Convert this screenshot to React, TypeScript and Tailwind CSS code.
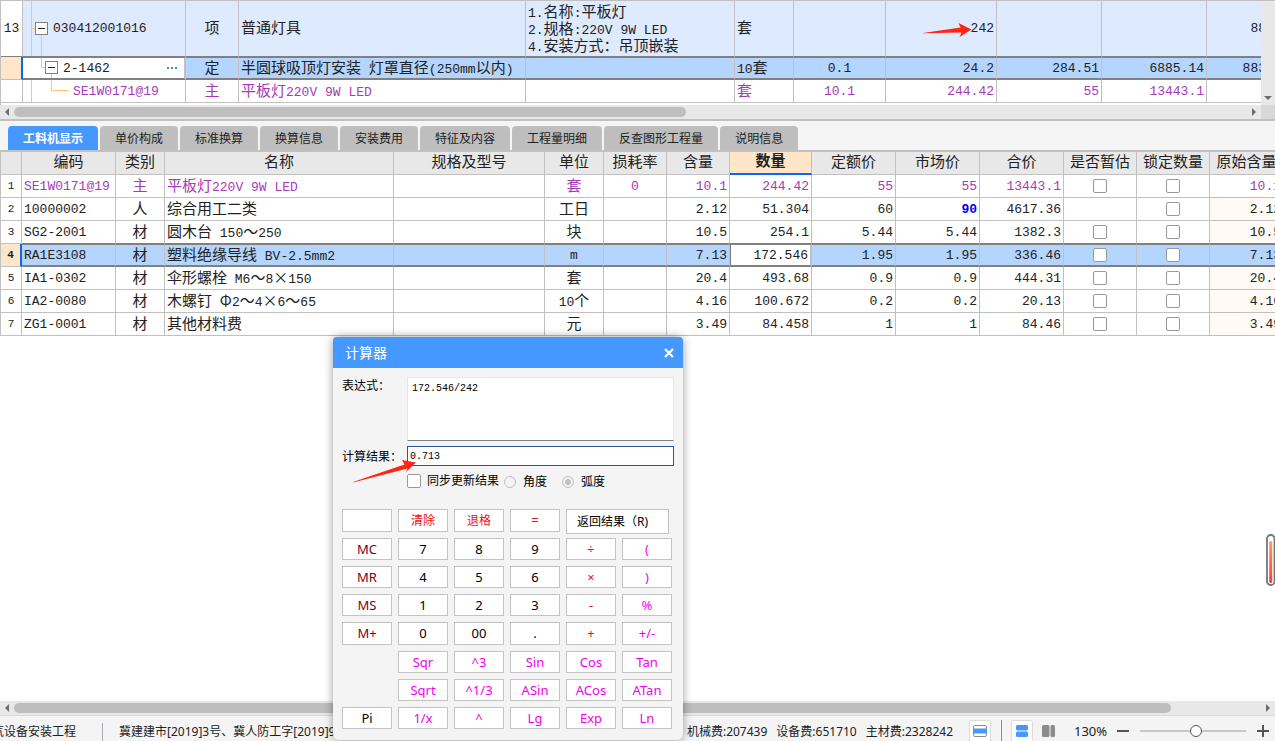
import { useState, type ReactNode } from 'react';
import clsx from 'clsx';

const GRID_FONT = "font-['Liberation_Mono','Noto_Sans_CJK_SC',monospace]";
const UI_FONT = "font-['Noto_Sans','Noto_Sans_CJK_SC',sans-serif]";

// Chinese runs are set a little larger than the monospaced latin ones
function Mixed({ text }: { text: string }) {
    const runs = text.split(/([\u2e80-\uffff×Φ]+)/).filter(Boolean);
    return (
        <>
            {runs.map((run, i) =>
                /[\u2e80-\uffff×Φ]/.test(run) ? (
                    <span key={i} className="font-['Noto_Sans_CJK_SC',sans-serif] text-[15px] leading-[15px]">{run}</span>
                ) : (
                    <span key={i}>{run}</span>
                )
            )}
        </>
    );
}

type CellProps = {
    children?: ReactNode;
    align?: 'left' | 'center' | 'right';
    selected?: boolean;
    aboveSelected?: boolean;
    className?: string;
};

function Cell({ children, align = 'left', selected, aboveSelected, className }: CellProps) {
    return (
        <td
            className={clsx(
                'relative border-r border-r-[#c0c0c0] px-0.5 py-0 whitespace-pre',
                align === 'center' && 'text-center',
                align === 'right' && 'text-right',
                selected ? 'border-t border-b-2 border-y-[#808080]' : 'border-b',
                !selected && (aboveSelected ? 'border-b-[#808080]' : 'border-b-[#c0c0c0]'),
                className
            )}
        >
            {typeof children === 'string' ? <Mixed text={children} /> : children}
        </td>
    );
}

function ScrollArrow({ dir }: { dir: 'left' | 'right' | 'down' }) {
    const paths = { left: 'M9 3v8L5 7z', right: 'M5 3v8l4-4z', down: 'M3 5h8l-4 4z' };
    return (
        <button aria-label={dir} className="size-[14px] shrink-0">
            <svg viewBox="0 0 14 14" className="size-[14px]"><path d={paths[dir]} fill="#6b6b75" /></svg>
        </button>
    );
}

/* ---------- top grid ---------- */

function BillGrid() {
    return (
        <section className={clsx('flex border-t border-l border-[#c0c0c0] bg-white text-[13px] text-[#222]', GRID_FONT)}>
            <div className="h-[104px] min-w-0 flex-1 overflow-hidden">
                <table className="w-[1268px] table-fixed border-separate border-spacing-0 leading-[17px]">
                    <colgroup>
                        <col className="w-[22px]" />
                        <col className="w-[163px]" />
                        <col className="w-[53px]" />
                        <col className="w-[287px]" />
                        <col className="w-[209px]" />
                        <col className="w-[59px]" />
                        <col className="w-[92px]" />
                        <col className="w-[111px]" />
                        <col className="w-[105px]" />
                        <col className="w-[105px]" />
                        <col className="w-[62px]" />
                    </colgroup>
                    <tbody>
                        <tr className="h-[56px] bg-[#deeaff]">
                            <Cell aboveSelected align="center" className="bg-white">13</Cell>
                            <Cell aboveSelected className="pl-[30px]">
                                <svg className="absolute top-0 left-0 h-[55px] w-[30px]" viewBox="0 0 30 55" fill="none">
                                    <path d="M8.5 0v55M9 27.5h4M18.5 34v21" stroke="#ffc56b" />
                                    <rect x="12.5" y="21.5" width="12" height="12" fill="#fff" stroke="#808080" />
                                    <path d="M15 27.5h7" stroke="#222" />
                                </svg>
                                <Mixed text="030412001016" />
                            </Cell>
                            <Cell aboveSelected align="center">项</Cell>
                            <Cell aboveSelected>普通灯具</Cell>
                            <Cell aboveSelected>
                                {['1.名称:平板灯', '2.规格:220V 9W LED', '4.安装方式：吊顶嵌装'].map((line) => (
                                    <p key={line} className="h-[17px]"><Mixed text={line} /></p>
                                ))}
                            </Cell>
                            <Cell aboveSelected>套</Cell>
                            <Cell aboveSelected />
                            <Cell aboveSelected align="right">
                                <svg className="absolute top-[21px] right-6 h-4 w-[49px]" viewBox="0 0 49 16">
                                    <path d="M0 11 37.5 5.5 35.5 1 48.5 7.5 36.5 15 38.5 10.5 0 11.3z" fill="#ff2414" />
                                </svg>
                                <span>242</span>
                            </Cell>
                            <Cell aboveSelected />
                            <Cell aboveSelected />
                            <Cell aboveSelected align="right">88</Cell>
                        </tr>
                        <tr className="h-[23px] bg-[#b3d5ff]">
                            <td className="border-r-2 border-b border-r-[#0a64ff] border-b-[#c0c0c0] bg-[#ffe6c8]" />
                            <Cell selected className="border-r-2 border-r-[#808080] bg-white pl-[40px]">
                                <svg className="absolute top-0 left-0 h-[20px] w-[40px]" viewBox="0 0 40 20" fill="none">
                                    <path d="M18.5 0v9.5h5M28.5 16v4" stroke="#ffc56b" />
                                    <rect x="22.5" y="3.5" width="12" height="12" fill="#fff" stroke="#808080" />
                                    <path d="M25 9.5h7" stroke="#222" />
                                </svg>
                                <span>2-1462</span>
                                <button aria-label="更多" className="absolute top-0 right-1.5 h-full">
                                    <svg className="h-[2px] w-[11px]" viewBox="0 0 11 2">
                                        <path d="M0 0h2v2H0zM4 0h2v2H4zM8 0h2v2H8z" fill="#3c8ccc" />
                                    </svg>
                                </button>
                            </Cell>
                            <Cell selected align="center">定</Cell>
                            <Cell selected>半圆球吸顶灯安装 灯罩直径(250mm以内)</Cell>
                            <Cell selected />
                            <Cell selected>10套</Cell>
                            <Cell selected align="center">0.1</Cell>
                            <Cell selected align="right">24.2</Cell>
                            <Cell selected align="right">284.51</Cell>
                            <Cell selected align="right">6885.14</Cell>
                            <Cell selected align="right">883</Cell>
                        </tr>
                        <tr className="h-[23px] text-[#a53cb5]">
                            <Cell />
                            <Cell className="pl-[50px]">
                                <svg className="absolute top-0 left-0 h-[22px] w-[48px]" viewBox="0 0 48 22" fill="none">
                                    <path d="M8.5 0v22M28.5 0v10.5h17" stroke="#ffc56b" />
                                </svg>
                                <span>SE1W0171@19</span>
                            </Cell>
                            <Cell align="center">主</Cell>
                            <Cell>平板灯220V 9W LED</Cell>
                            <Cell />
                            <Cell>套</Cell>
                            <Cell align="center">10.1</Cell>
                            <Cell align="right">244.42</Cell>
                            <Cell align="right">55</Cell>
                            <Cell align="right">13443.1</Cell>
                            <Cell />
                        </tr>
                    </tbody>
                </table>
            </div>
            <div className="flex w-[14px] shrink-0 flex-col justify-end bg-[#e8e8e8]">
                <ScrollArrow dir="down" />
            </div>
        </section>
    );
}

/* ---------- tabs ---------- */

const tabs = ['工料机显示', '单价构成', '标准换算', '换算信息', '安装费用', '特征及内容', '工程量明细', '反查图形工程量', '说明信息'];

function Tabs() {
    const [active, setActive] = useState(0);
    return (
        <nav className="flex gap-0.5 border-b-2 border-[#c0c0c0] bg-[#f5f5f5] pt-[5px] pl-2 text-xs">
            {tabs.map((tab, i) => (
                <button
                    key={tab}
                    onClick={() => setActive(i)}
                    className={clsx(
                        'h-6 rounded-t-sm px-[15px] pt-0.5 whitespace-nowrap',
                        i === active ? 'bg-[#4598ff] font-bold text-white' : 'bg-[#bebebe] text-[#222]'
                    )}
                >
                    {tab}
                </button>
            ))}
        </nav>
    );
}

/* ---------- resource grid ---------- */

const headers = ['编码', '类别', '名称', '规格及型号', '单位', '损耗率', '含量', '数量', '定额价', '市场价', '合价', '是否暂估', '锁定数量', '原始含量'];

type Resource = {
    code: string;
    kind: string;
    name: string;
    unit: string;
    loss?: string;
    content: string;
    qty: string;
    quota: string;
    market: string;
    total: string;
    noEstimate?: boolean;
};

const resources: Resource[] = [
    { code: 'SE1W0171@19', kind: '主', name: '平板灯220V 9W LED', unit: '套', loss: '0', content: '10.1', qty: '244.42', quota: '55', market: '55', total: '13443.1' },
    { code: '10000002', kind: '人', name: '综合用工二类', unit: '工日', content: '2.12', qty: '51.304', quota: '60', market: '90', total: '4617.36', noEstimate: true },
    { code: 'SG2-2001', kind: '材', name: '圆木台 150～250', unit: '块', content: '10.5', qty: '254.1', quota: '5.44', market: '5.44', total: '1382.3' },
    { code: 'RA1E3108', kind: '材', name: '塑料绝缘导线 BV-2.5mm2', unit: 'm', content: '7.13', qty: '172.546', quota: '1.95', market: '1.95', total: '336.46' },
    { code: 'IA1-0302', kind: '材', name: '伞形螺栓 M6～8×150', unit: '套', content: '20.4', qty: '493.68', quota: '0.9', market: '0.9', total: '444.31' },
    { code: 'IA2-0080', kind: '材', name: '木螺钉 Φ2～4×6～65', unit: '10个', content: '4.16', qty: '100.672', quota: '0.2', market: '0.2', total: '20.13' },
    { code: 'ZG1-0001', kind: '材', name: '其他材料费', unit: '元', content: '3.49', qty: '84.458', quota: '1', market: '1', total: '84.46' },
];

function Tick({ label }: { label: string }) {
    return (
        <input
            type="checkbox"
            aria-label={label}
            className="mx-auto block size-[14px] appearance-none rounded-[2px] border border-[#999] bg-white checked:bg-[#4598ff]"
        />
    );
}

function ResourceGrid() {
    const selectedRow = 3;
    return (
        <section className={clsx('min-h-0 flex-1 overflow-hidden bg-white text-[13px] text-[#222]', GRID_FONT)}>
            <table className="w-[1284px] table-fixed border-separate border-spacing-0 border-l border-[#c0c0c0] leading-[17px]">
                <colgroup>
                    <col className="w-[21px]" />
                    <col className="w-[94px]" />
                    <col className="w-[49px]" />
                    <col className="w-[229px]" />
                    <col className="w-[151px]" />
                    <col className="w-[59px]" />
                    <col className="w-[63px]" />
                    <col className="w-[63px]" />
                    <col className="w-[82px]" />
                    <col className="w-[84px]" />
                    <col className="w-[84px]" />
                    <col className="w-[84px]" />
                    <col className="w-[73px]" />
                    <col className="w-[73px]" />
                    <col className="w-[74px]" />
                </colgroup>
                <thead>
                    <tr className="h-[23px] bg-[#e8e8e8] text-[15px]">
                        <th className="border-r border-b border-[#c0c0c0]" />
                        {headers.map((h) => (
                            <th
                                key={h}
                                className={clsx(
                                    'border-r border-[#c0c0c0] p-0 whitespace-nowrap',
                                    h === '数量'
                                        ? 'border-b-2 border-b-[#0a64ff] bg-[#ffe6c8] font-bold'
                                        : 'border-b font-normal'
                                )}
                            >
                                {h}
                            </th>
                        ))}
                    </tr>
                </thead>
                <tbody>
                    {resources.map((r, i) => {
                        const selected = i === selectedRow;
                        const edge = { selected, aboveSelected: i === selectedRow - 1 };
                        return (
                            <tr key={r.code} className={clsx('h-[23px]', selected && 'bg-[#b3d5ff]', i === 0 && 'text-[#a53cb5]')}>
                                <td
                                    className={clsx(
                                        'border-b border-b-[#c0c0c0] p-0 text-center text-[11px]',
                                        selected ? 'border-r-2 border-r-[#0a64ff] bg-[#ffe6c8] font-bold' : 'border-r border-r-[#c0c0c0]',
                                        i === 0 && 'text-[#222]'
                                    )}
                                >
                                    {i + 1}
                                </td>
                                <Cell {...edge}>{r.code}</Cell>
                                <Cell {...edge} align="center">{r.kind}</Cell>
                                <Cell {...edge}>{r.name}</Cell>
                                <Cell {...edge} />
                                <Cell {...edge} align="center">{r.unit}</Cell>
                                <Cell {...edge} align="center">{r.loss ?? ''}</Cell>
                                <Cell {...edge} align="right" className={selected ? 'border-r-[#808080]' : ''}>{r.content}</Cell>
                                <Cell {...edge} align="right" className={selected ? 'border-r-2 border-l border-x-[#808080] bg-white' : ''}>{r.qty}</Cell>
                                <Cell {...edge} align="right">{r.quota}</Cell>
                                <Cell {...edge} align="right" className={r.market === '90' ? 'font-bold text-[#0000f0]' : ''}>{r.market}</Cell>
                                <Cell {...edge} align="right">{r.total}</Cell>
                                <Cell {...edge}>{!r.noEstimate && <Tick label={`${r.name} 是否暂估`} />}</Cell>
                                <Cell {...edge}><Tick label={`${r.name} 锁定数量`} /></Cell>
                                <Cell {...edge} align="right" className={i > 0 && !selected ? 'bg-[#fffaf5]' : ''}>{r.content}</Cell>
                            </tr>
                        );
                    })}
                </tbody>
            </table>
        </section>
    );
}

/* ---------- calculator ---------- */

type Key = { label: string; tone?: 'black' | 'red' | 'maroon' | 'pink'; wide?: boolean; hidden?: boolean };

const tones = {
    black: 'text-black',
    red: 'text-[#ee1111]',
    maroon: 'text-[#800010]',
    pink: 'text-[#f000f0]',
};

const row = (labels: string[], list: Key['tone'][]): Key[] =>
    labels.map((label, i) => ({ label, tone: list[i], hidden: label === '' }));

const digits: Key['tone'][] = ['maroon', 'black', 'black', 'black', 'red', 'pink'];
const funcs: Key['tone'][] = ['black', 'pink', 'pink', 'pink', 'pink', 'pink'];

const keys: Key[] = [
    { label: ' ' },
    { label: '清除', tone: 'red' },
    { label: '退格', tone: 'red' },
    { label: '=', tone: 'red' },
    { label: '返回结果（R)', wide: true },
    ...row(['MC', '7', '8', '9', '÷', '('], digits),
    ...row(['MR', '4', '5', '6', '×', ')'], digits),
    ...row(['MS', '1', '2', '3', '-', '%'], digits),
    ...row(['M+', '0', '00', '.', '+', '+/-'], digits),
    ...row(['', 'Sqr', '^3', 'Sin', 'Cos', 'Tan'], funcs),
    ...row(['', 'Sqrt', '^1/3', 'ASin', 'ACos', 'ATan'], funcs),
    ...row(['Pi', '1/x', '^', 'Lg', 'Exp', 'Ln'], funcs),
];

function Calculator() {
    const [expression, setExpression] = useState('172.546/242');
    const [result, setResult] = useState('0.713');

    return (
        <div role="dialog" aria-label="计算器" className="absolute top-[337px] left-[333px] w-[350px] rounded-md bg-[#f4f4f4] pb-[11px] text-xs text-black shadow-[0_0_10px_rgba(0,0,0,0.4)]">
            <header className="flex h-[31px] items-center justify-between rounded-t-[4px] bg-[#4598ff] pr-[9px] pl-3 text-sm text-white">
                <h2>计算器</h2>
                <button aria-label="关闭">
                    <svg className="size-[10px]" viewBox="0 0 10 10"><path d="M1 1l8 8M9 1L1 9" stroke="#fff" strokeWidth="2.2" /></svg>
                </button>
            </header>
            <div className="relative flex flex-col px-[9px] pt-[9px]">
                <div className="flex">
                    <label htmlFor="expr" className="w-[65px] shrink-0 pt-px">表达式：</label>
                    <textarea
                        id="expr"
                        value={expression}
                        onChange={(e) => setExpression(e.target.value)}
                        className="h-16 flex-1 resize-none border border-[#e6e6e6] border-b-[#808080] bg-white px-1 py-[3px] font-['Liberation_Mono',monospace] text-[10px] leading-4 outline-none"
                    />
                </div>
                <div className="mt-[5px] flex items-center">
                    <label htmlFor="result" className="w-[65px] shrink-0 pt-px whitespace-nowrap">计算结果：</label>
                    <input
                        id="result"
                        value={result}
                        onChange={(e) => setResult(e.target.value)}
                        className="h-5 min-w-0 flex-1 border border-[#2a5699] bg-white px-0.5 font-['Liberation_Mono',monospace] text-[10px] outline-none"
                    />
                </div>
                <div className="mt-[5px] flex h-5 items-center pl-[65px]">
                    <label className="flex items-center gap-1.5">
                        <input type="checkbox" className="size-[14px] appearance-none rounded-[2px] border border-[#999] bg-white" />
                        同步更新结果
                    </label>
                    <label className="ml-[5px] flex items-center gap-[7px] pt-0.5">
                        <input type="radio" name="angle" className="size-3 appearance-none rounded-full border border-[#c0c0c0]" />
                        角度
                    </label>
                    <label className="ml-[15px] flex items-center gap-[7px] pt-0.5">
                        <input type="radio" name="angle" defaultChecked className="size-3 appearance-none rounded-full border border-[#c0c0c0] bg-[#f4f4f4] bg-clip-content p-0.5 checked:bg-[#c0c0c0]" />
                        弧度
                    </label>
                </div>
                <div className="mt-[18px] grid grid-cols-[repeat(6,50px)] grid-rows-[23px_22px_22px_22px_23px_22px_22px_22px] gap-1.5">
                    {keys.map((k, i) =>
                        k.hidden ? (
                            <span key={i} />
                        ) : (
                            <button
                                key={i}
                                aria-label={k.label.trim() || '空'}
                                className={clsx(
                                    'flex items-center border border-[#c3c3c3] bg-white pt-px',
                                    tones[k.tone ?? 'black'],
                                    k.wide ? 'col-span-2 h-[25px] w-[103px] justify-start pl-[10px] text-xs' : 'justify-center',
                                    !k.wide && (/[\u4e00-\u9fff]/.test(k.label) ? 'text-xs' : 'text-[13px]')
                                )}
                            >
                                {k.label}
                            </button>
                        )
                    )}
                </div>
                <svg className="absolute top-[91px] left-5 h-[25px] w-[64px]" viewBox="0 0 64 25">
                    <path d="M0 23 51.5 5.5 49 1 63 3.5 53 13 54.5 9.5 0 23.5z" fill="#ff2414" />
                </svg>
            </div>
        </div>
    );
}

/* ---------- status bar ---------- */

function StatusBar() {
    return (
        <footer className="flex h-[26px] items-start overflow-hidden border-t border-[#d8d8d8] bg-[#f4f4f4] pt-1 text-xs leading-[22px] whitespace-nowrap text-[#222]">
            <span className="-ml-2 pt-px">气设备安装工程</span>
            <span className="mt-[3px] ml-[26px] h-5 w-px bg-[#a9a9b5]" />
            <span className="ml-4 min-w-0 shrink overflow-hidden pt-px">冀建建市[2019]3号、冀人防工字[2019]9</span>
            <div className="ml-auto flex shrink-0 items-start">
                <span className="pt-px">机械费:207439</span>
                <span className="ml-[9px] pt-px">设备费:651710</span>
                <span className="ml-[9px] pt-px">主材费:2328242</span>
                <button aria-label="单栏" className="ml-4 flex size-[22px] items-center justify-center rounded-[2px] border border-[#dcdcdc] bg-white">
                    <svg className="h-3 w-[14px]" viewBox="0 0 14 12">
                        <rect x="0.5" y="0.5" width="13" height="11" rx="1.5" fill="#fff" stroke="#8c8c8c" />
                        <path d="M0 3.5h14v5H0z" fill="#4598ff" />
                    </svg>
                </button>
                <span className="ml-[10px] h-[22px] w-px bg-[#8c8c8c]" />
                <button aria-label="上下布局" className="ml-[9px] flex size-[22px] items-center justify-center rounded-[2px] border border-[#dcdcdc] bg-white">
                    <svg className="h-3 w-3" viewBox="0 0 12 12" fill="#4598ff">
                        <rect width="12" height="5.5" rx="1.5" />
                        <rect y="6.5" width="12" height="5.5" rx="1.5" />
                    </svg>
                </button>
                <button aria-label="左右布局" className="ml-[9px] flex h-[22px] items-center">
                    <svg className="h-3 w-[13px]" viewBox="0 0 13 12" fill="#8c8c8c">
                        <rect width="7.5" height="12" rx="1.5" />
                        <rect x="8.5" width="4.5" height="12" rx="1.5" />
                    </svg>
                </button>
                <span className="ml-[19px] w-[35px] text-[13px]">130%</span>
                <button aria-label="缩小" className="ml-2 flex h-[22px] items-center">
                    <svg className="size-3" viewBox="0 0 12 12"><path d="M0 6h12" stroke="#555" strokeWidth="2" /></svg>
                </button>
                <input
                    type="range"
                    aria-label="缩放"
                    defaultValue={53}
                    className="mx-[11px] h-[22px] w-[106px] appearance-none bg-transparent [&::-webkit-slider-runnable-track]:h-0.5 [&::-webkit-slider-runnable-track]:bg-[#c8c8c8] [&::-webkit-slider-thumb]:-mt-[5px] [&::-webkit-slider-thumb]:size-3 [&::-webkit-slider-thumb]:appearance-none [&::-webkit-slider-thumb]:rounded-full [&::-webkit-slider-thumb]:border [&::-webkit-slider-thumb]:border-[#555] [&::-webkit-slider-thumb]:bg-white"
                />
                <button aria-label="放大" className="mr-1.5 flex h-[22px] items-center">
                    <svg className="size-3" viewBox="0 0 12 12"><path d="M0 6h12M6 0v12" stroke="#555" strokeWidth="2" /></svg>
                </button>
            </div>
        </footer>
    );
}

export default function App() {
    return (
        <main lang="zh-CN" className={clsx('relative flex h-screen flex-col overflow-hidden bg-white', UI_FONT)}>
            <BillGrid />
            <div className="flex h-4 items-start border-b-2 border-[#c0c0c0] bg-[#e8e8e8]">
                <ScrollArrow dir="left" />
                <div className="flex-1 pt-0.5">
                    <div className="h-[10px] w-[54.5%] rounded-full bg-[#bebebe]" />
                </div>
                <ScrollArrow dir="right" />
                <div className="h-[14px] w-[14px] bg-[#d8d8d8]" />
            </div>
            <Tabs />
            <ResourceGrid />
            <div className="flex h-[14px] items-start bg-[#e8e8e8]">
                <ScrollArrow dir="left" />
                <div className="flex-1 pt-0.5">
                    <div className="h-[10px] w-[92.8%] rounded-full bg-[#bebebe]" />
                </div>
                <ScrollArrow dir="right" />
            </div>
            <StatusBar />

            {/* usage meter docked on the right edge */}
            <svg className="absolute top-[534px] right-0 h-[52px] w-[9px]" viewBox="0 0 9 52">
                <defs>
                    <linearGradient id="heat" x1="0" y1="0" x2="0" y2="1">
                        <stop offset="0" stopColor="#ff9f55" />
                        <stop offset="1" stopColor="#ff3b3b" />
                    </linearGradient>
                </defs>
                <rect x="1" y="1" width="7.5" height="50" rx="3.5" fill="#fff" stroke="#777" strokeWidth="1.8" />
                <rect x="3.2" y="7" width="3" height="42" rx="1.5" fill="url(#heat)" />
            </svg>

            <Calculator />
        </main>
    );
}
